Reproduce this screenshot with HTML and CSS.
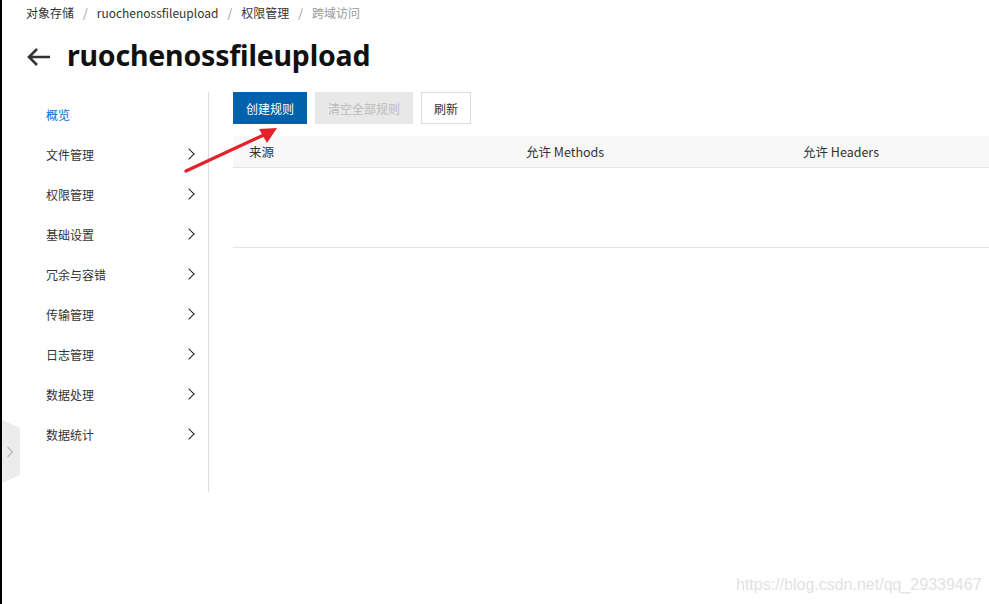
FILE: index.html
```html
<!DOCTYPE html>
<html lang="zh">
<head>
<meta charset="utf-8">
<link rel="stylesheet" href="styles.css">
</head>
<body>
<div class="page">
  <nav class="crumbs">
    <span>对象存储</span><span class="sep">/</span><span>ruochenossfileupload</span><span class="sep">/</span><span>权限管理</span><span class="sep">/</span><span class="cur">跨域访问</span>
  </nav>
  <header class="head">
    <svg class="back" width="26" height="20" viewBox="0 0 26 20"><path d="M24 10H3M11 2L3 10l8 8" fill="none" stroke="#333" stroke-width="2.6"/></svg>
    <h1>ruochenossfileupload</h1>
  </header>
  <div class="body">
    <aside class="side">
      <div class="item active">概览</div>
      <div class="item">文件管理<span class="chev"></span></div>
      <div class="item">权限管理<span class="chev"></span></div>
      <div class="item">基础设置<span class="chev"></span></div>
      <div class="item">冗余与容错<span class="chev"></span></div>
      <div class="item">传输管理<span class="chev"></span></div>
      <div class="item">日志管理<span class="chev"></span></div>
      <div class="item">数据处理<span class="chev"></span></div>
      <div class="item">数据统计<span class="chev"></span></div>
    </aside>
    <main class="main">
      <div class="toolbar">
        <button class="btn primary">创建规则</button>
        <button class="btn disabled">清空全部规则</button>
        <button class="btn plain">刷新</button>
      </div>
      <div class="table">
        <div class="thead">
          <div class="th">来源</div>
          <div class="th">允许 Methods</div>
          <div class="th">允许 Headers</div>
        </div>
        <div class="empty"></div>
      </div>
    </main>
  </div>
  <div class="collapse"><svg width="8" height="12" viewBox="0 0 8 12"><path d="M1.5 1l5 5-5 5" fill="none" stroke="#bbb" stroke-width="1.4"/></svg></div>
  <svg class="annot" width="110" height="60" viewBox="0 0 110 60"><path d="M2 53L84 15" stroke="#e5202a" stroke-width="3.2" stroke-linecap="round"/><path d="M93 10L75 11L83 25Z" fill="#e5202a"/></svg>
  <div class="mark">https://blog.csdn.net/qq_29339467</div>
</div>
</body>
</html>
```
FILE: styles.css
```css
* { box-sizing: border-box; }
html, body { margin: 0; padding: 0; background: #fff; }
body {
  font-family: "Noto Sans CJK SC", "Noto Sans", sans-serif;
  font-size: 12px;
  color: #333;
  width: 989px;
  height: 604px;
  overflow: hidden;
}
.page {
  position: relative;
  height: 604px;
  border-left: 2px solid #000;
  padding-left: 24px;
}
.crumbs {
  height: 26px;
  display: flex;
  align-items: center;
  line-height: 1;
  color: #333;
}
.crumbs .sep { color: #999; margin: 0 9px; }
.crumbs .cur { color: #999; }
.head {
  display: flex;
  align-items: center;
  height: 58px;
  padding-top: 2px;
  padding-bottom: 2px;
}
.back { margin-left: 0; margin-right: 15px; margin-top: 3px; }
.head h1 {
  margin: 0;
  font-family: "Noto Sans", sans-serif;
  font-weight: 700;
  font-size: 28.5px;
  color: #111;
  letter-spacing: -0.2px;
}
.body {
  display: flex;
  margin-top: 8px;
}
.side {
  width: 183px;
  border-right: 1px solid #ddd;
  height: 400px;
  padding-top: 2px;
}
.item {
  height: 40px;
  display: flex;
  align-items: center;
  justify-content: space-between;
  padding-left: 20px;
  padding-right: 15px;
  color: #333;
}
.item.active { color: #0070cc; }
.chev {
  width: 8px;
  height: 8px;
  border-right: 1.5px solid #222;
  border-top: 1.5px solid #222;
  transform: rotate(45deg);
}
.main {
  flex: 1;
  padding-left: 24px;
}
.toolbar {
  display: flex;
  gap: 8px;
  height: 32px;
}
.btn {
  font-family: inherit;
  font-size: 12px;
  height: 32px;
  padding: 0 12px;
  border: 1px solid transparent;
  border-radius: 0;
}
.btn.primary { background: #0062ad; color: #fff; border-color: #0062ad; }
.btn.disabled { background: #e8e8e8; color: #bbb; border-color: #e8e8e8; }
.btn.plain { background: #fff; color: #333; border-color: #ddd; padding: 0 12px; }
.table { margin-top: 12px; }
.thead {
  display: grid;
  grid-template-columns: 277px 277px 1fr;
  height: 32px;
  background: #f8f8f8;
  border-bottom: 1px solid #e5e5e5;
  align-items: center;
}
.th { padding-left: 16px; color: #333; font-size: 12.5px; }
.empty {
  height: 80px;
  border-bottom: 1px solid #e5e5e5;
}
.collapse {
  position: absolute;
  left: 0;
  top: 420px;
  width: 18px;
  height: 63px;
  background: #ececec;
  clip-path: polygon(0 0, 100% 8px, 100% 55px, 0 100%);
  display: flex;
  align-items: center;
  justify-content: center;
  padding-right: 2px;
}
.annot {
  position: absolute;
  left: 182px;
  top: 118px;
}
.mark {
  position: absolute;
  left: 734px;
  top: 576px;
  font-family: "Liberation Sans", Arial, sans-serif;
  font-size: 16px;
  color: #e2e2e2;
}
```
